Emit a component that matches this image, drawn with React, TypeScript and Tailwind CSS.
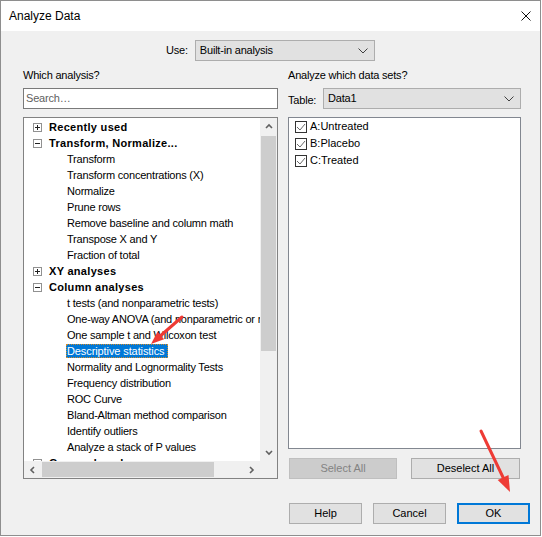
import React from "react";

type Row =
  | { kind: "group"; label: string; open: boolean }
  | { kind: "item"; label: string; selected?: boolean };

const rows: Row[] = [
  { kind: "group", label: "Recently used", open: false },
  { kind: "group", label: "Transform, Normalize...", open: true },
  { kind: "item", label: "Transform" },
  { kind: "item", label: "Transform concentrations (X)" },
  { kind: "item", label: "Normalize" },
  { kind: "item", label: "Prune rows" },
  { kind: "item", label: "Remove baseline and column math" },
  { kind: "item", label: "Transpose X and Y" },
  { kind: "item", label: "Fraction of total" },
  { kind: "group", label: "XY analyses", open: false },
  { kind: "group", label: "Column analyses", open: true },
  { kind: "item", label: "t tests (and nonparametric tests)" },
  { kind: "item", label: "One-way ANOVA (and nonparametric or mixed)" },
  { kind: "item", label: "One sample t and Wilcoxon test" },
  { kind: "item", label: "Descriptive statistics", selected: true },
  { kind: "item", label: "Normality and Lognormality Tests" },
  { kind: "item", label: "Frequency distribution" },
  { kind: "item", label: "ROC Curve" },
  { kind: "item", label: "Bland-Altman method comparison" },
  { kind: "item", label: "Identify outliers" },
  { kind: "item", label: "Analyze a stack of P values" },
  { kind: "group", label: "Grouped analyses", open: false },
];

const dataSets = ["A:Untreated", "B:Placebo", "C:Treated"];

function Chevron({ dir }: { dir: "up" | "down" | "left" | "right" }) {
  const pts: Record<string, string> = {
    up: "1,5 4,2 7,5",
    down: "1,2 4,5 7,2",
    left: "5,1 2,4 5,7",
    right: "2,1 5,4 2,7",
  };
  return (
    <svg width="8" height="8" viewBox="0 0 8 8">
      <polyline points={pts[dir]} fill="none" stroke="#606060" strokeWidth="1.6" />
    </svg>
  );
}

function ComboArrow() {
  return (
    <svg width="10" height="6" viewBox="0 0 10 6">
      <polyline points="0.5,0.5 5,5 9.5,0.5" fill="none" stroke="#404040" strokeWidth="1" />
    </svg>
  );
}

function Expander({ open }: { open: boolean }) {
  return (
    <div className="relative w-[9px] h-[9px] border border-[#919191] bg-white shrink-0">
      <div className="absolute left-[1px] top-[3px] w-[5px] h-[1px] bg-[#222]" />
      {!open && <div className="absolute left-[3px] top-[1px] w-[1px] h-[5px] bg-[#222]" />}
    </div>
  );
}

function Checkbox() {
  return (
    <div className="w-[12px] h-[12px] border border-[#333] bg-white shrink-0 flex items-center justify-center">
      <svg width="10" height="10" viewBox="0 0 10 10">
        <polyline points="1,5 4,8 9,2" fill="none" stroke="#6a6a6a" strokeWidth="1" />
      </svg>
    </div>
  );
}

export default function App() {
  const base = "font-['Liberation_Sans',Arial,sans-serif] text-[11px] text-black";
  return (
    <div className="relative w-[542px] h-[537px] bg-white">
      <div className={`relative w-[541px] h-[536px] border border-[#8e8e8e] bg-[#f0f0f0] flex flex-col ${base}`}>
        {/* title bar */}
        <div className="h-[30px] bg-white flex items-center justify-between pl-[8px] pr-[9px] shrink-0">
          <span className="text-[12px] leading-none">Analyze Data</span>
          <svg width="10" height="10" viewBox="0 0 10 10">
            <path d="M0.5 0.5 L9.5 9.5 M9.5 0.5 L0.5 9.5" stroke="#111" strokeWidth="1" />
          </svg>
        </div>

        {/* "Use:" selector */}
        <div className="mt-[9px] h-[21px] flex items-center pl-[165px] shrink-0">
          <span className="tracking-[-0.2px]">Use:</span>
          <div className="ml-[7px] w-[180px] h-[21px] border border-[#adadad] bg-[#e1e1e1] flex items-center justify-between pl-[4px] pr-[6px]">
            <span className="tracking-[-0.2px]">Built-in analysis</span>
            <ComboArrow />
          </div>
        </div>

        {/* two columns */}
        <div className="mt-[7px] flex pl-[22px] gap-[10px] shrink-0">
          {/* left column */}
          <div className="w-[255px] flex flex-col">
            <div className="h-[14px] leading-[14px] tracking-[-0.2px]">Which analysis?</div>
            <div className="mt-[6px] h-[21px] border border-[#7a7a7a] bg-white flex items-center pl-[2px]">
              <span className="text-[#5f5f5f] tracking-[-0.2px]">Search…</span>
            </div>
            <div className="mt-[8px] h-[362px] border border-[#828282] bg-white flex flex-col">
              <div className="flex h-[343px]">
                <div className="w-[236px] overflow-hidden pt-[1px]">
                  {rows.map((r, i) =>
                    r.kind === "group" ? (
                      <div key={i} className="h-[16px] flex items-center pl-[9px] whitespace-nowrap">
                        <Expander open={r.open} />
                        <span className="ml-[7px] font-bold tracking-[0.3px]">{r.label}</span>
                      </div>
                    ) : (
                      <div key={i} className="h-[16px] flex items-center pl-[42px] whitespace-nowrap">
                        {r.selected ? (
                          <span className="h-[14px] leading-[12px] pr-[3px] border border-dotted border-[#d08a2c] bg-[#0078d7] text-white tracking-[-0.1px]">
                            {r.label}
                          </span>
                        ) : (
                          <span className="pl-[1px] tracking-[-0.2px]">{r.label}</span>
                        )}
                      </div>
                    )
                  )}
                </div>
                {/* vertical scrollbar */}
                <div className="w-[17px] bg-[#f0f0f0] flex flex-col">
                  <div className="h-[17px] flex items-center justify-center">
                    <Chevron dir="up" />
                  </div>
                  <div className="flex-1 flex flex-col px-[1px] pt-[1px]">
                    <div className="h-[215px] bg-[#cdcdcd]" />
                  </div>
                  <div className="h-[17px] flex items-center justify-center">
                    <Chevron dir="down" />
                  </div>
                </div>
              </div>
              {/* horizontal scrollbar */}
              <div className="flex h-[17px]">
                <div className="w-[236px] bg-[#f0f0f0] flex items-center">
                  <div className="w-[17px] h-[17px] flex items-center justify-center">
                    <Chevron dir="left" />
                  </div>
                  <div className="flex-1 h-[17px] py-[1px] pl-[1px]">
                    <div className="w-[172px] h-[15px] bg-[#cdcdcd]" />
                  </div>
                  <div className="w-[17px] h-[17px] flex items-center justify-center">
                    <Chevron dir="right" />
                  </div>
                </div>
                <div className="w-[17px] bg-[#f0f0f0]" />
              </div>
            </div>
          </div>

          {/* right column */}
          <div className="w-[233px] flex flex-col">
            <div className="h-[14px] leading-[14px] tracking-[-0.2px]">Analyze which data sets?</div>
            <div className="mt-[6px] h-[21px] flex items-center justify-between">
              <span className="pt-[3px] tracking-[-0.2px]">Table:</span>
              <div className="w-[198px] h-[21px] border border-[#adadad] bg-[#e1e1e1] flex items-center justify-between pl-[4px] pr-[6px]">
                <span className="tracking-[-0.2px]">Data1</span>
                <ComboArrow />
              </div>
            </div>
            <div className="mt-[8px] h-[332px] border border-[#828790] bg-white flex flex-col">
              {dataSets.map((d) => (
                <div key={d} className="h-[17px] flex items-center pl-[6px] gap-[3px]">
                  <Checkbox />
                  <span>{d}</span>
                </div>
              ))}
            </div>
            <div className="mt-[9px] h-[21px] flex pl-[1px]">
              <div className="w-[108px] h-[21px] border border-[#bfbfbf] bg-[#cccccc] text-[#838383] flex items-center justify-center">
                Select All
              </div>
              <div className="ml-[14px] w-[109px] h-[21px] border border-[#adadad] bg-[#e1e1e1] flex items-center justify-center">
                Deselect All
              </div>
            </div>
          </div>
        </div>

        {/* dialog buttons */}
        <div className="mt-[24px] flex justify-end pr-[10px] gap-[11px]">
          <div className="w-[73px] h-[21px] border border-[#adadad] bg-[#e1e1e1] flex items-center justify-center">Help</div>
          <div className="w-[73px] h-[21px] border border-[#adadad] bg-[#e1e1e1] flex items-center justify-center">Cancel</div>
          <div className="w-[73px] h-[21px] border-2 border-[#0078d7] bg-[#e1e1e1] flex items-center justify-center">OK</div>
        </div>
      </div>

      {/* red callout arrows drawn on top */}
      <svg className="absolute left-0 top-0 pointer-events-none" width="542" height="537" viewBox="0 0 542 537">
        <line x1="182" y1="317" x2="160.8" y2="335.5" stroke="#ee3b35" strokeWidth="3" strokeLinecap="round" />
        <polygon points="151,344 164.1,339.3 157.5,331.7" fill="#ee3b35" />
        <line x1="481" y1="431" x2="503.1" y2="477.5" stroke="#ee3b35" strokeWidth="3" strokeLinecap="round" />
        <polygon points="510,492 508.5,474.9 497.7,480.1" fill="#ee3b35" />
      </svg>
    </div>
  );
}
